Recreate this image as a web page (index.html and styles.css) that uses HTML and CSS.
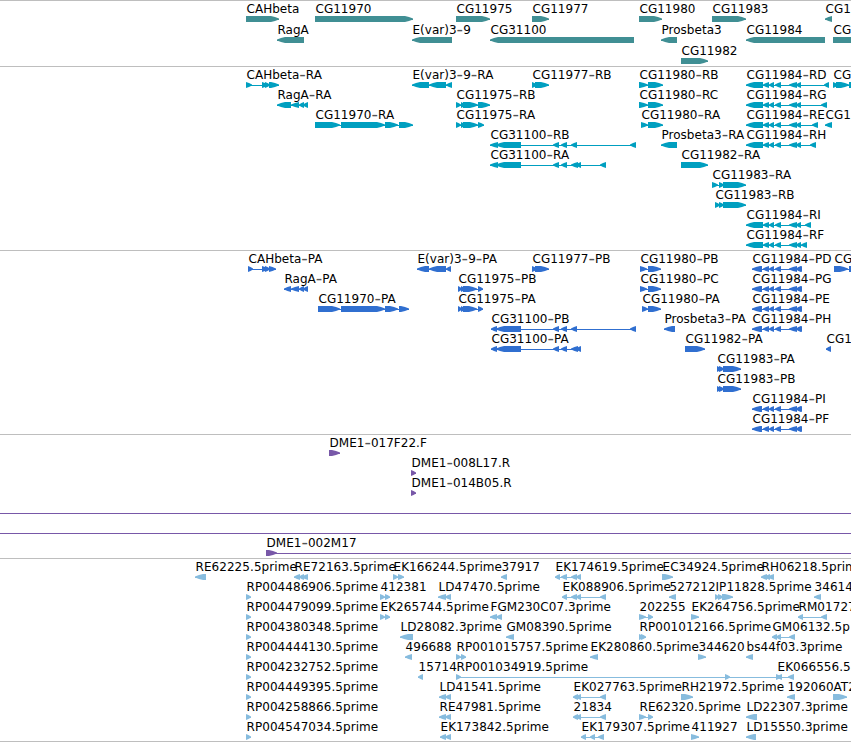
FILE: index.html
```
<!DOCTYPE html>
<html lang="en">
<head>
<meta charset="utf-8">
<title>Genome tracks</title>
<link rel="stylesheet" href="styles.css">
</head>
<body>
<main class="browser">
<section class="track genes" data-track="genes"></section>
<section class="track transcripts" data-track="transcripts"></section>
<section class="track proteins" data-track="proteins"></section>
<section class="track clones" data-track="clones"></section>
<section class="track ests" data-track="ests"></section>
</main>
<script src="tracks.js"></script>
</body>
</html>
```
FILE: styles.css
```
body {
  margin: 0;
  background: #fff;
  overflow: hidden;
}

.browser {
  display: flex;
  flex-direction: column;
  width: 851px;
  height: 742px;
  box-sizing: border-box;
  border-bottom: 1px solid #bebebe;
}

.track {
  box-sizing: border-box;
  border-top: 1px solid #bebebe;
}

.track svg {
  display: block;
  width: 851px;
  height: 100%;
  overflow: visible;
}

.genes { height: 66px; color: #408f94; }
.transcripts { height: 184px; color: #009fc0; }
.proteins { height: 184px; color: #306fd0; }
.clones { height: 124px; color: #7858a8; }
.ests { height: 183px; color: #87bcde; }

.feature { fill: currentColor; }

.label {
  font-family: "DejaVu Sans", sans-serif;
  font-size: 12px;
  letter-spacing: 0.02px;
  fill: #000;
}

.ests .label { letter-spacing: 0.06px; }

.label .dash {
  font-size: 18px;
  fill: #555;
}
```
FILE: tracks.js
```
// Each feature: row | label | strand | blocks (start-end), optional line extent
const tail = ",763-769,769-774,775-781,789-797,796-801";
const tracks = {
  genes: { pitch: 21, data: `
0|CAHbeta|>|246-279
0|CG11970|>|315-413
0|CG11975|>|456-490
0|CG11977|>|532-549
0|CG11980|>|639-662
0|CG11983|>|712-746
0|CG1|<|825-832
1|RagA|<|277-304
1|E(var)3-9|<|412-452
1|CG31100|<|490-634
1|Prosbeta3|<|661-677
1|CG11984|<|746-825
1|CG|>|833-880
2|CG11982|>|681-708` },
  transcripts: { pitch: 20, data: `
0|CAHbeta-RA|>|246-252,262-268,265-270,269-279
0|E(var)3-9-RA|<|412-429,429-446,446-452
0|CG11977-RB|>|532-537,535-549
0|CG11980-RB|>|639-648,648-663
0|CG11984-RD|<|746-763${tail},824-829
0|CG|>|833-838,836-849,849-870
1|RagA-RA|<|277-291,291-299,299-304,303-308
1|CG11975-RB|>|456-461,461-465,463-478,478-490
1|CG11980-RC|>|639-648,648-663
1|CG11984-RG|<|746-763${tail},821-827
2|CG11970-RA|>|315-340,341-385,385-398,399-413
2|CG11975-RA|>|456-461,461-465,463-478,478-484
2|CG11980-RA|>|641-648,648-663
2|CG11984-RE|<|746-763${tail},812-818
2|CG1|<|825-832
3|CG31100-RB|<|490-498,496-521,553-559,561-567,571-577,630-636
3|Prosbeta3-RA|<|661-677
3|CG11984-RH|<|746-763${tail},810-816
4|CG31100-RA|<|490-498,496-521,553-559,561-567,571-578,576-581,600-606
4|CG11982-RA|>|681-708
5|CG11983-RA|>|712-718,719-724,723-746
6|CG11983-RB|>|715-720,719-724,723-746
7|CG11984-RI|<|746-763${tail},805-811
8|CG11984-RF|<|746-763${tail},801-807` },
  proteins: { pitch: 20, data: `
0|CAHbeta-PA|>|248-253,262-268,265-270,269-276
0|E(var)3-9-PA|<|417-429,429-446,446-451
0|CG11977-PB|>|532-537,535-549
0|CG11980-PB|>|640-647,648-661
0|CG11984-PD|<|752-762${tail},797-802
0|CG|>|834-848,849-870
1|RagA-PA|<|284-291,291-299,299-304,303-308
1|CG11975-PB|>|458-462,461-465,463-477,478-483
1|CG11980-PC|>|640-647,648-661
1|CG11984-PG|<|752-762${tail},797-802
2|CG11970-PA|>|318-340,341-385,385-398,399-409
2|CG11975-PA|>|458-462,461-465,463-477,478-483
2|CG11980-PA|>|642-648,648-661
2|CG11984-PE|<|752-762${tail},797-802
3|CG31100-PB|<|491-497,496-521,553-559,561-567,571-577,630-636
3|Prosbeta3-PA|<|664-675
3|CG11984-PH|<|752-762${tail},797-802
4|CG31100-PA|<|491-497,496-521,553-559,561-567,571-578,576-581
4|CG11982-PA|>|685-705
4|CG1|<|826-831
5|CG11983-PA|>|717-721,719-724,723-741
6|CG11983-PB|>|717-721,719-724,723-741
7|CG11984-PI|<|752-762${tail},797-802
8|CG11984-PF|<|752-762${tail},797-802` },
  clones: { pitch: 20, data: `
0|DME1-017F22.F|>|329-340
1|DME1-008L17.R|>|411-416
2|DME1-014B05.R|>|411-416
3||>||0-851
4||>||0-851
5|DME1-002M17|>|266-277|266-851` },
  ests: { pitch: 20, data: `
0|RE62225.5prime|<|195-206
0|RE72163.5prime|<|294-300,299-304,302-308
0|EK166244.5prime|>|393-398,398-404
0|37917|<|501-507
0|EK174619.5prime|<|555-560,561-567,571-577,576-581
0|EC34924.5prime|>|662-673
0|RH06218.5prim|<|761-767,765-770,768-774
1|RP004486906.5prime|>|246-251
1|412381|>|380-385,385-390
1|LD47470.5prime|<|438-446,445-451
1|EK088906.5prime|<|562-567,571-577,576-581,600-606
1|527212|<|669-676
1|IP11828.5prime|>|715-719,718-723,722-733
1|34614|<|814-821
2|RP004479099.5prime|>|246-251
2|EK265744.5prime|>|380-385,385-390
2|FGM230C07.3prime|<|490-497,496-502
2|202255|>|639-646,648-653
2|EK264756.5prime|>|691-699
2|RM01727|<|798-803,821-827
3|RP004380348.5prime|>|246-251
3|LD28082.3prime|<|400-413
3|GM08390.5prime|<|506-514
3|RP001012166.5prime|>|639-644,641-646
3|GM06132.5p|<|772-777,776-781,789-795
4|RP004444130.5prime|>|246-251
4|496688|<|405-412
4|RP001015757.5prime|>|456-461,461-466
4|EK280860.5prime|<|590-598
4|344620|>|698-706
4|bs44f03.3prime|<|746-753
5|RP004232752.5prime|>|246-251
5|15714|<|418-423
5|RP001034919.5prime|>|456-461,725-730,776-781
5|EK066556.5|<|777-782,788-794
6|RP004449395.5prime|>|246-251
6|LD41541.5prime|<|439-446,445-451
6|EK027763.5prime|<|573-578,576-581,600-606
6|RH21972.5prime|>|681-693
6|192060|<|787-795
6|AT2|>|833-847
7|RP004258866.5prime|>|246-251
7|RE47981.5prime|<|439-446,445-451
7|21834|<|573-578,576-581,600-606
7|RE62320.5prime|>|639-646,648-653
7|LD22307.3prime|<|746-757
8|RP004547034.5prime|>|246-251
8|EK173842.5prime|<|440-446,445-451
8|EK179307.5prime|<|581-586,590-595,598-604
8|411927|>|691-699
8|LD15550.3prime|<|746-756` }
};

// A block tapers to a blunt point on its strand side over at most 8px.
function block(a, b, strand, y) {
  const head = Math.min(8, b - a);
  const right = strand === ">";
  const flat = right ? a : b;
  const tip = right ? b : a;
  const s = right ? -1 : 1;
  const mid = tip + s * head * 0.5;
  return `M${flat} ${y}H${tip + s * head}L${mid} ${y + 1}L${tip} ${y + 2.6}V${y + 3.6}` +
    `L${mid} ${y + 5}L${tip + s * head} ${y + 6}H${flat}Z`;
}

function label(text, x, y) {
  const parts = text.split("-").map((p, i) =>
    i ? `<tspan class="dash" dy="1">-</tspan><tspan dy="-1">${p}</tspan>` : p);
  return `<text class="label" x="${x + 0.5}" y="${y}">${parts.join("")}</text>`;
}

document.querySelectorAll("[data-track]").forEach(el => {
  const { pitch, data } = tracks[el.dataset.track];
  let out = "";
  data.trim().split("\n").forEach(line => {
    const [row, name, strand, segs, extent] = line.split("|");
    const y = row * pitch;
    const blocks = segs ? segs.split(",").map(s => s.split("-").map(Number)) : [];
    const [from, to] = extent ? extent.split("-").map(Number)
      : [blocks[0][0], blocks[blocks.length - 1][1]];
    out += blocks.map(b => `<path class="feature" d="${block(b[0], b[1], strand, y + 15)}"/>`).join("");
    out += `<rect class="feature" x="${from}" y="${y + 18}" width="${to - from}" height="1"/>`;
    if (name) out += label(name, from, y + 12);
  });
  el.innerHTML = `<svg>${out}</svg>`;
});
```
